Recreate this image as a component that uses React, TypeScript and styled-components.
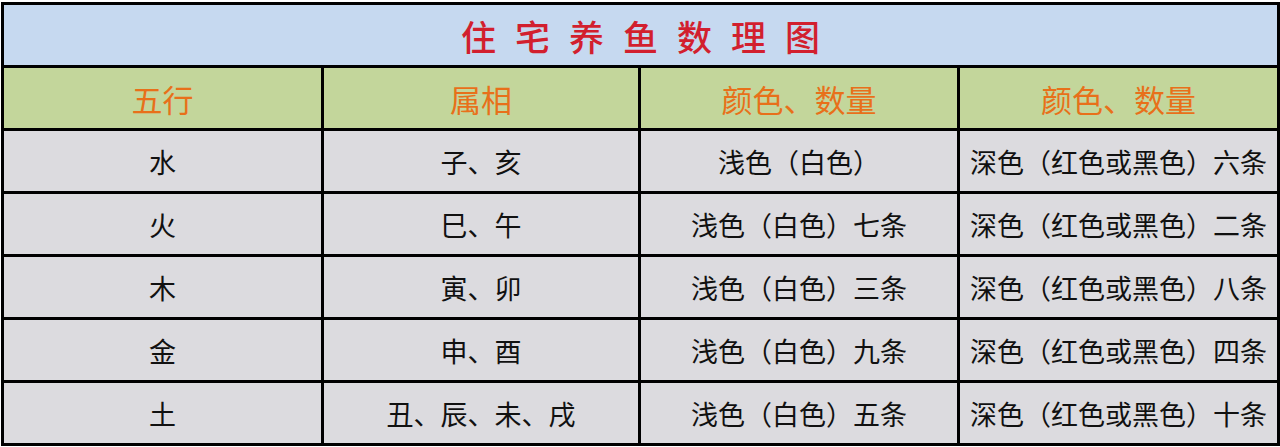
import React from 'react';
import styled, { createGlobalStyle } from 'styled-components';

const GlobalStyle = createGlobalStyle`
  html, body {
    margin: 0;
    padding: 0;
    background: #ffffff;
  }
  body {
    font-family: "Noto Sans CJK SC", "Noto Sans", sans-serif;
  }
`;

const Page = styled.div`
  padding: 2px 3px 0 1px;
  width: 1276px;
`;

const Table = styled.table`
  width: 1276px;
  border-collapse: collapse;
  table-layout: fixed;
  border: 3px solid #000;
`;

const Col = styled.col<{ $w: number }>`
  width: ${(p) => p.$w}px;
`;

const TitleCell = styled.th`
  height: 60px;
  background: #c6d9f0;
  color: #d21f2e;
  font-size: 35px;
  font-weight: 500;
  letter-spacing: 19px;
  text-indent: 19px;
  text-align: center;
  border: 3px solid #000;
  padding: 0;
`;

const HeadCell = styled.th`
  height: 60px;
  background: #c3d69b;
  color: #e8701a;
  font-size: 31px;
  font-weight: 400;
  text-align: center;
  border: 3px solid #000;
  padding: 0;
`;

const Cell = styled.td`
  height: 60px;
  background: #dcdbdf;
  color: #111;
  font-size: 27px;
  text-align: center;
  border: 3px solid #000;
  padding: 0;
  white-space: nowrap;
`;

const colWidths = [320, 317, 319, 320];

const headers = ['五行', '属相', '颜色、数量', '颜色、数量'];

const rows: [string, string, string, string][] = [
  ['水', '子、亥', '浅色（白色）', '深色（红色或黑色）六条'],
  ['火', '巳、午', '浅色（白色）七条', '深色（红色或黑色）二条'],
  ['木', '寅、卯', '浅色（白色）三条', '深色（红色或黑色）八条'],
  ['金', '申、酉', '浅色（白色）九条', '深色（红色或黑色）四条'],
  ['土', '丑、辰、未、戌', '浅色（白色）五条', '深色（红色或黑色）十条'],
];

export default function App() {
  return (
    <Page>
      <GlobalStyle />
      <Table>
        <colgroup>
          {colWidths.map((w, i) => (
            <Col key={i} $w={w} />
          ))}
        </colgroup>
        <thead>
          <tr>
            <TitleCell colSpan={4}>住宅养鱼数理图</TitleCell>
          </tr>
          <tr>
            {headers.map((h, i) => (
              <HeadCell key={i}>{h}</HeadCell>
            ))}
          </tr>
        </thead>
        <tbody>
          {rows.map((r) => (
            <tr key={r[0]}>
              {r.map((c, i) => (
                <Cell key={i}>{c}</Cell>
              ))}
            </tr>
          ))}
        </tbody>
      </Table>
    </Page>
  );
}
